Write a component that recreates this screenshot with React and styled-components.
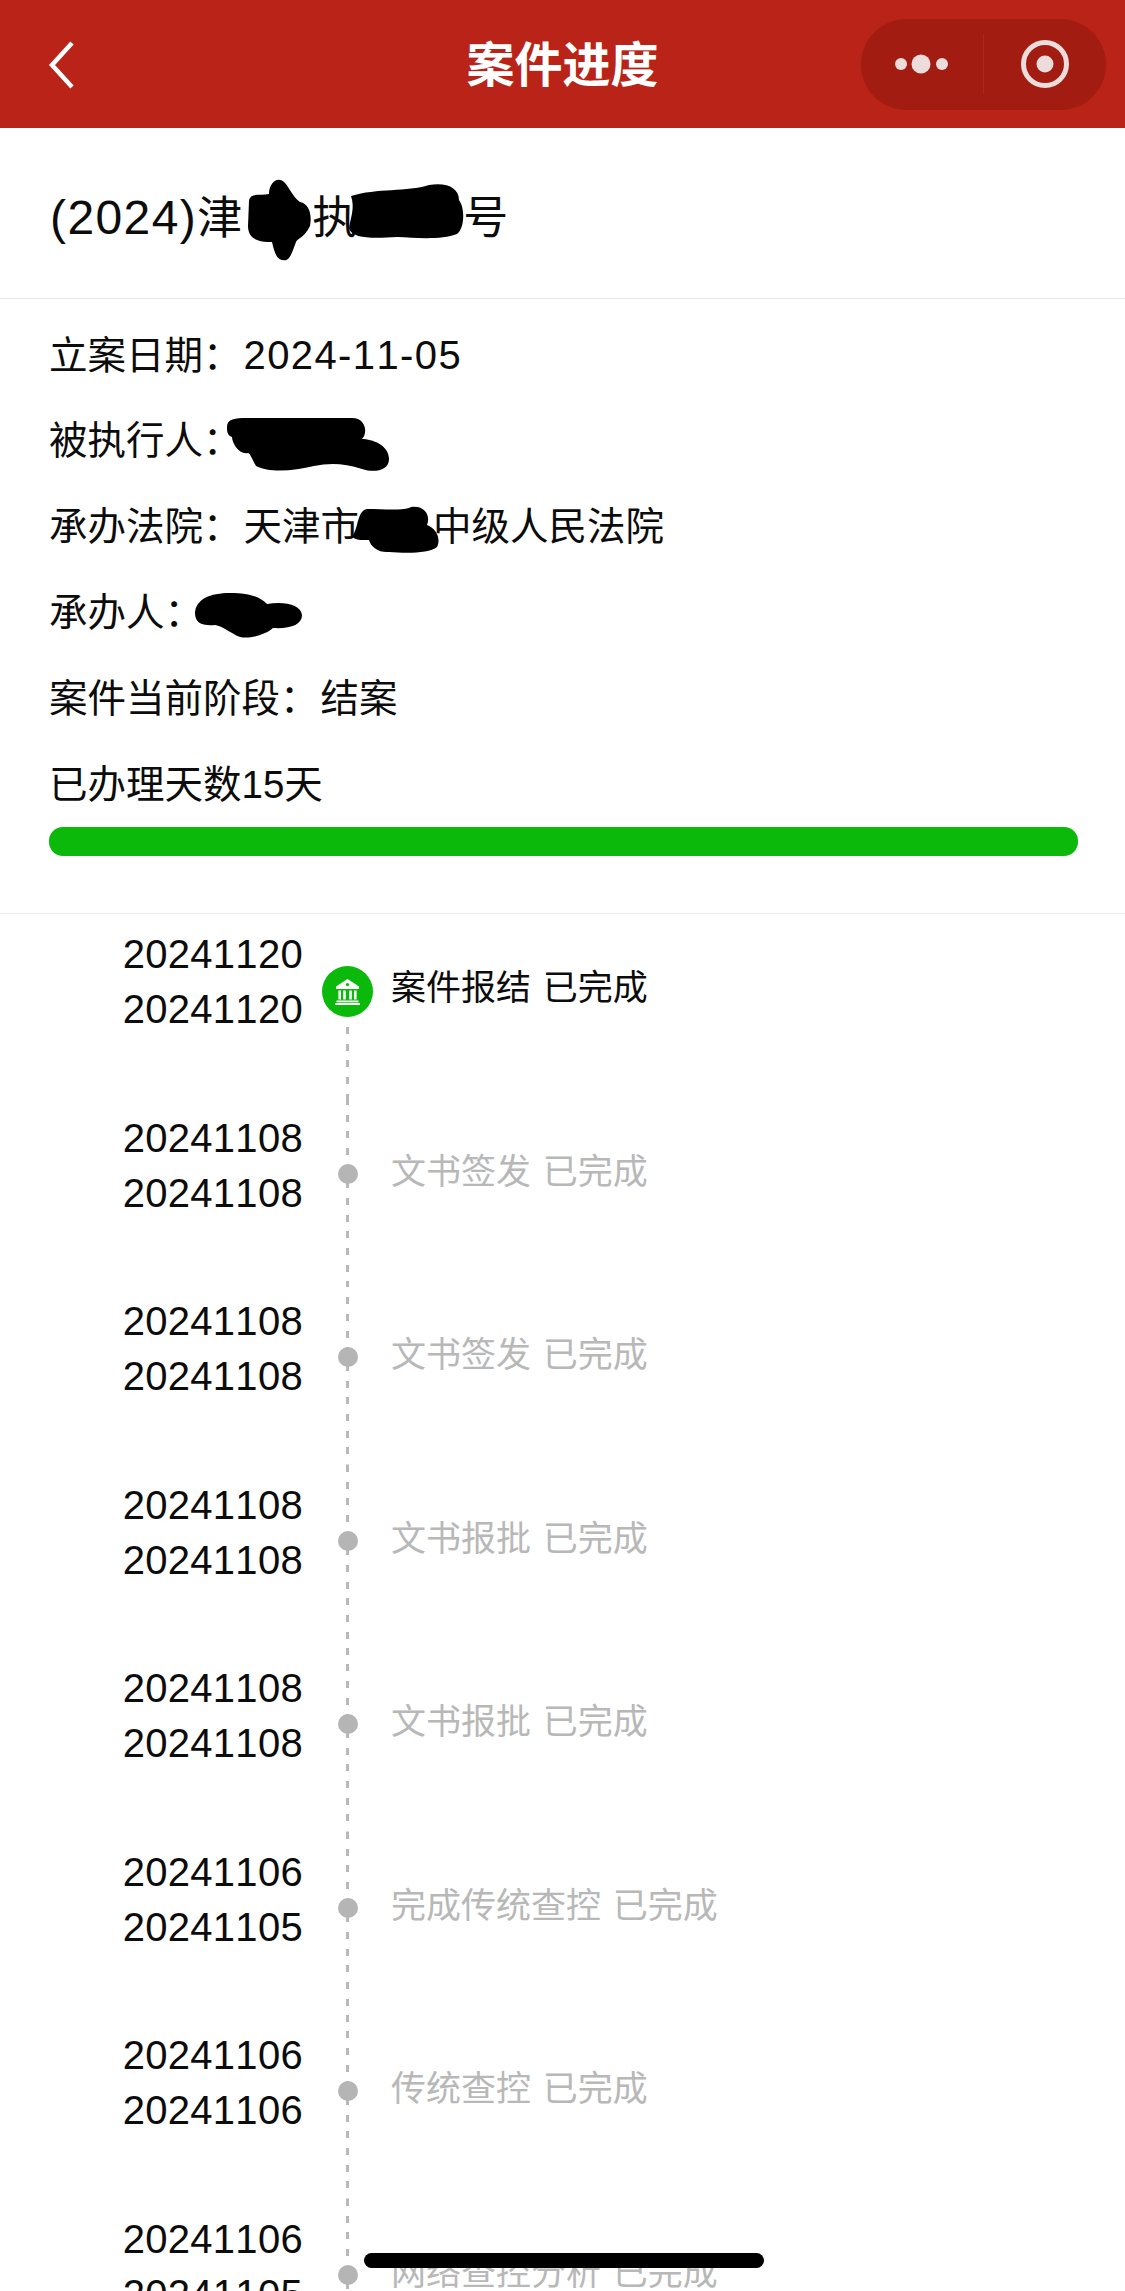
import React from "react";
import styled, { createGlobalStyle } from "styled-components";

const FONT = `"Liberation Sans", "Noto Sans CJK SC", sans-serif`;

const steps = [
  { end: "20241120", start: "20241120", label: "案件报结 已完成", current: true },
  { end: "20241108", start: "20241108", label: "文书签发 已完成" },
  { end: "20241108", start: "20241108", label: "文书签发 已完成" },
  { end: "20241108", start: "20241108", label: "文书报批 已完成" },
  { end: "20241108", start: "20241108", label: "文书报批 已完成" },
  { end: "20241106", start: "20241105", label: "完成传统查控 已完成" },
  { end: "20241106", start: "20241106", label: "传统查控 已完成" },
  { end: "20241106", start: "20241105", label: "网络查控分析 已完成" },
];

// marker scribbles over the private bits, coords are relative to line centre
const scribbles = {
  caseA: "M7 -15 C8 -24 20 -20 27 -22 C27 -34 36 -40 42 -34 C48 -28 50 -20 58 -14 C68 -12 70 0 68 10 C62 22 56 22 54 26 C50 36 48 46 41 44 C34 44 32 34 30 26 C18 26 6 24 6 10 Z",
  caseB: "M-6 -20 C20 -28 50 -24 72 -31 C90 -34 102 -28 102 -16 C108 -8 108 12 100 18 C85 24 60 22 40 21 C20 22 -5 24 -8 12 C-6 0 -2 -8 -6 -20 Z",
  party: "M-17 -14 C-17 -24 -5 -23 10 -23 L108 -23 C122 -23 124 -8 118 -2 C128 -2 145 4 145 18 C145 30 130 32 118 28 C100 22 85 22 70 25 C50 30 25 32 12 25 C8 18 6 12 4 12 C-5 14 -12 2 -12 -4 C-17 -6 -17 -10 -17 -14 Z",
  court: "M-7 10 C0 0 -2 -16 8 -18 C25 -18 45 -16 52 -20 C65 -22 72 -12 68 -2 C78 2 82 12 78 20 C70 27 45 26 30 25 C20 26 12 20 10 13 C5 13 -2 14 -7 10 Z",
  judge: "M-10 0 C-9 -14 5 -20 25 -20 C45 -20 55 -16 62 -9 C80 -12 96 -8 97 2 C97 12 85 16 68 15 C60 22 45 26 35 24 C25 20 18 13 10 12 C-3 13 -10 10 -10 0 Z",
};

const Redacted = ({ name, width, lift = 0 }) => (
  <Blank $width={width}>
    <BlankInk viewBox={`0 ${-60 + lift} 10 120`} width="10" height="120">
      <path d={scribbles[name]} fill="#000" />
    </BlankInk>
  </Blank>
);

const BankIcon = () => (
  <svg width="25" height="26" viewBox="0 0 25 26" fill="#fff">
    <path d="M12.5 0 L24 7.5 V10 H1 V7.5 Z" />
    <circle cx="12.5" cy="5.6" r="1.7" fill="#0bb90b" />
    <rect x="3.4" y="11.5" width="2.6" height="9" />
    <rect x="8.2" y="11.5" width="2.6" height="9" />
    <rect x="14.2" y="11.5" width="2.6" height="9" />
    <rect x="19" y="11.5" width="2.6" height="9" />
    <rect x="1.5" y="21.5" width="22" height="1.8" />
    <rect x="0" y="24" width="25" height="2" />
  </svg>
);

const App = () => {
  return (
    <Page>
      <GlobalStyle />
      <NavBar>
        <BackIcon width="30" height="50" viewBox="0 0 30 50">
          <path d="M25 3 L5 25 L25 47" fill="none" stroke="#fff" strokeWidth="4.5" />
        </BackIcon>
        <NavTitle>案件进度</NavTitle>
        <Capsule>
          <CapsuleSlot>
            <svg width="56" height="20" viewBox="0 0 56 20" fill="#ecdcdb">
              <circle cx="7" cy="10" r="6" />
              <circle cx="27" cy="10" r="9.5" />
              <circle cx="48" cy="10" r="6" />
            </svg>
          </CapsuleSlot>
          <CapsuleLine />
          <CapsuleSlot>
            <svg width="50" height="50" viewBox="0 0 50 50">
              <circle cx="25" cy="25" r="21.5" fill="none" stroke="#ecdcdb" strokeWidth="5" />
              <circle cx="25" cy="25" r="8.5" fill="#ecdcdb" />
            </svg>
          </CapsuleSlot>
        </Capsule>
      </NavBar>

      <CaseNo>
        <CaseYear>(2024)</CaseYear>津<Redacted name="caseA" width={70} lift={6} />执<Redacted name="caseB" width={106} lift={6} />号
      </CaseNo>

      <Info>
        <InfoRow><Label>立案日期：</Label><DateValue>2024-11-05</DateValue></InfoRow>
        <InfoRow><Label>被执行人：</Label><Redacted name="party" width={150} lift={3} /></InfoRow>
        <InfoRow><Label>承办法院：</Label>天津市<Redacted name="court" width={74} lift={3} />中级人民法院</InfoRow>
        <InfoRow><Label>承办人：</Label><Redacted name="judge" width={100} lift={3} /></InfoRow>
        <InfoRow><Label>案件当前阶段：</Label>结案</InfoRow>
        <InfoRow>已办理天数15天</InfoRow>
        <Progress />
      </Info>

      <Timeline>
        {steps.map((step, i) => (
          <Step key={i}>
            <Dates>
              <div>{step.end}</div>
              <div>{step.start}</div>
            </Dates>
            <Axis $current={step.current}>
              {step.current ? <Badge><BankIcon /></Badge> : <Dot />}
            </Axis>
            <StepLabel $current={step.current}>{step.label}</StepLabel>
          </Step>
        ))}
      </Timeline>

      <HomeBar />
    </Page>
  );
};

const GlobalStyle = createGlobalStyle`
  html, body {
    margin: 0;
    padding: 0;
    background: #fff;
  }
`;

const Page = styled.div`
  position: relative;
  width: 1125px;
  height: 2291px;
  overflow: hidden;
  background: #fff;
  color: #0c0c0c;
  font-family: ${FONT};
`;

const NavBar = styled.div`
  display: grid;
  grid-template-columns: 1fr auto 1fr;
  align-items: center;
  height: 128px;
  padding: 0 19px;
  background: #b92318;
`;

const BackIcon = styled.svg`
  margin-left: 28px;
  margin-top: 2px;
`;

const NavTitle = styled.div`
  padding-top: 4px;
  color: #fff;
  font-size: 48px;
  font-weight: 700;
  line-height: 124px;
`;

const Capsule = styled.div`
  justify-self: end;
  display: flex;
  align-items: center;
  width: 245px;
  height: 91px;
  border-radius: 46px;
  background: #a31c12;
`;

const CapsuleSlot = styled.div`
  flex: 1;
  display: flex;
  align-items: center;
  justify-content: center;
`;

const CapsuleLine = styled.div`
  width: 1px;
  height: 60px;
  background: rgba(255, 255, 255, 0.06);
`;

const CaseNo = styled.div`
  height: 170px;
  padding-left: 50px;
  font-size: 45px;
  line-height: 180px;
  white-space: nowrap;
  border-bottom: 1px solid #e6e6e6;
`;

const CaseYear = styled.span`
  font-size: 48px;
  font-kerning: none;
  letter-spacing: 1.4px;
`;

const Blank = styled.span`
  position: relative;
  display: inline-block;
  width: ${(p) => p.$width}px;
  height: 1em;
  vertical-align: middle;
`;

const BlankInk = styled.svg`
  position: absolute;
  left: 0;
  top: 50%;
  margin-top: -60px;
  overflow: visible;
`;

const Info = styled.div`
  padding: 13px 47px 57px 49px;
  border-bottom: 1px solid #e9ecef;
`;

const InfoRow = styled.div`
  height: 86px;
  font-size: 38.5px;
  line-height: 86px;
  white-space: nowrap;
`;

const Label = styled.span`
  margin-right: 2px;
`;

const DateValue = styled.span`
  font-size: 40px;
  font-kerning: none;
  letter-spacing: 1.4px;
`;

const Progress = styled.div`
  height: 29px;
  margin-top: -1px;
  border-radius: 14px;
  background: #0bb90b;
`;

const Timeline = styled.div`
  display: flex;
  flex-direction: column;
`;

const Step = styled.div`
  flex: none;
  display: grid;
  grid-template-columns: 303px 89px 1fr;
  height: 183.5px;
`;

const Dates = styled.div`
  padding-top: 13px;
  font-size: 40px;
  font-kerning: none;
  letter-spacing: 0.3px;
  line-height: 55px;
  text-align: right;
  color: #0c0c0c;
`;

const Axis = styled.div`
  display: flex;
  flex-direction: column;
  align-items: center;
  background-image: repeating-linear-gradient(to bottom, #b8b8b8 0 7px, transparent 7px 16.68px);
  background-repeat: no-repeat;
  background-position: center bottom;
  background-size: ${(p) => (p.$current ? "3px 71px" : "3px 100%")};
`;

const Badge = styled.div`
  display: flex;
  align-items: center;
  justify-content: center;
  flex: none;
  width: 51px;
  height: 51px;
  margin-top: 52px;
  border-radius: 50%;
  background: #0bb90b;
`;

const Dot = styled.div`
  flex: none;
  width: 20px;
  height: 20px;
  margin-top: 66px;
  border-radius: 50%;
  background: #b5b5b5;
`;

const StepLabel = styled.div`
  margin-left: -1px;
  padding-top: 49px;
  font-size: 35px;
  word-spacing: 2px;
  line-height: 50px;
  white-space: nowrap;
  color: ${(p) => (p.$current ? "#0c0c0c" : "#b8b8b8")};
`;

const HomeBar = styled.div`
  position: absolute;
  left: 364px;
  bottom: 23px;
  width: 400px;
  height: 15px;
  border-radius: 8px;
  background: #000;
`;

export default App;
